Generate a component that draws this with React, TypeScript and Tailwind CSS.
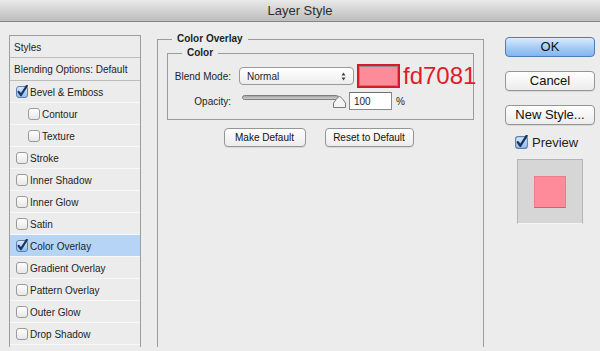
import React from 'react';

type Row = {
  label: string;
  header?: boolean;
  checked?: boolean;
  indent?: boolean;
  selected?: boolean;
  h?: string;
};

const ROWS: Row[] = [
  { label: 'Styles', header: true },
  { label: 'Blending Options: Default', header: true, h: 'h-[23px]' },
  { label: 'Bevel & Emboss', checked: true },
  { label: 'Contour', indent: true },
  { label: 'Texture', indent: true },
  { label: 'Stroke' },
  { label: 'Inner Shadow' },
  { label: 'Inner Glow' },
  { label: 'Satin' },
  { label: 'Color Overlay', checked: true, selected: true },
  { label: 'Gradient Overlay' },
  { label: 'Pattern Overlay' },
  { label: 'Outer Glow' },
  { label: 'Drop Shadow' },
];

const CheckBox: React.FC<{ checked?: boolean; size?: number }> = ({ checked, size = 12 }) => (
  <svg width={size + 1} height={size + 2} viewBox="0 0 13 14" className="shrink-0">
    <defs>
      <linearGradient id="cbOff" x1="0" y1="0" x2="0" y2="1">
        <stop offset="0" stopColor="#ffffff" />
        <stop offset="1" stopColor="#e6e6e6" />
      </linearGradient>
      <linearGradient id="cbOn" x1="0" y1="0" x2="0" y2="1">
        <stop offset="0" stopColor="#dcebfb" />
        <stop offset="1" stopColor="#8dbbee" />
      </linearGradient>
    </defs>
    <rect
      x="0.5"
      y="1.5"
      width="11"
      height="11"
      rx="2.5"
      fill={checked ? 'url(#cbOn)' : 'url(#cbOff)'}
      stroke={checked ? '#5f7fa8' : '#9a9a9a'}
    />
    {checked && (
      <path d="M2.6 6.8 L5 10 L10.8 0.8" fill="none" stroke="#1b3563" strokeWidth="2.2" strokeLinecap="round" strokeLinejoin="round" />
    )}
  </svg>
);

const btn =
  'flex items-center justify-center rounded-[4px] border border-[#959595] bg-gradient-to-b from-white to-[#ececec] text-[#111] shadow-[0_1px_0_rgba(0,0,0,0.08)]';

const App: React.FC = () => {
  return (
    <div className="flex h-[351px] w-[600px] flex-col overflow-hidden bg-[#ececec] font-['Liberation_Sans',Arial,sans-serif] text-[#1e1e1e]">
      {/* title bar */}
      <div className="flex h-[22px] shrink-0 items-center justify-center border-b border-[#848484] bg-gradient-to-b from-[#e9e9e9] to-[#bdbdbd] text-[13px] text-[#2e2e2e]">
        Layer Style
      </div>

      <div className="flex flex-1 pb-[4px]">
        {/* styles list */}
        <div className="ml-[9px] mt-[13px] w-[132px] shrink-0 border border-b-0 border-[#9d9d9d] text-[10px]">
          {ROWS.map((r, i) => (
            <div
              key={r.label}
              className={`flex items-center pt-[1px] ${r.h ?? 'h-[22px]'} border-b ${
                i < 2 ? 'border-[#bcbcbc]' : 'border-[#f8f8f8]'
              } ${r.selected ? 'bg-[#b5d4f6]' : ''} ${r.header ? 'pl-[4px]' : r.indent ? 'pl-[18px]' : 'pl-[6px]'}`}
            >
              {!r.header && <CheckBox checked={r.checked} />}
              <span className={r.header ? '' : 'ml-[1px]'}>{r.label}</span>
            </div>
          ))}
        </div>

        {/* color overlay */}
        <fieldset className="ml-[16px] mt-[11px] w-[327px] min-w-0 shrink-0 border border-b-0 border-[#9c9c9c] p-0">
          <legend className="ml-[14px] px-[5px] text-[10px] font-bold leading-[12px]">Color Overlay</legend>
          <div className="px-[9px]">
            <fieldset className="mt-[2px] w-[307px] min-w-0 border border-[#9c9c9c] p-0">
              <legend className="ml-[14px] px-[5px] text-[10px] font-bold leading-[12px]">Color</legend>
              <div className="pb-[9px] pt-[5px] text-[10px]">
                <div className="flex h-[24px] items-center">
                  <span className="w-[63px] shrink-0 text-right">Blend Mode:</span>
                  <div className="ml-[8px] flex h-[18px] w-[115px] shrink-0 items-center justify-between rounded-[4px] border border-[#9a9a9a] bg-gradient-to-b from-white to-[#ededed] pl-[7px] pr-[7px]">
                    <span>Normal</span>
                    <svg width="5" height="9" viewBox="0 0 5 9">
                      <path d="M2.5 0.5 L4.5 3.5 H0.5 Z M2.5 8.5 L4.5 5.5 H0.5 Z" fill="#444" />
                    </svg>
                  </div>
                  <div className="ml-[3px] flex h-[24px] w-[43px] shrink-0 border-2 border-[#d31b2b]">
                    <div className="flex-1 border border-[#8e8e8e] bg-[#fd8b9a]" />
                  </div>
                  <span className="ml-[3px] shrink-0 text-[24px] leading-none text-[#dc1e2c]">fd7081</span>
                </div>
                <div className="mt-[4px] flex h-[18px] items-center">
                  <span className="w-[63px] shrink-0 text-right">Opacity:</span>
                  <div className="relative ml-[11px] h-[18px] w-[104px] shrink-0">
                    <div className="absolute left-0 top-[3px] h-[5px] w-[97px] rounded-full border border-[#7d7d7d] bg-gradient-to-b from-[#a5a5a5] to-[#cfcfcf]" />
                    <svg className="absolute left-[91px] top-[3px]" width="13" height="13" viewBox="0 0 13 13">
                      <path d="M0.5 12.5 V8 Q3 4 6.5 1 Q10 4 12.5 8 V12.5 Z" fill="#f4f4f4" stroke="#7a7a7a" />
                    </svg>
                  </div>
                  <div className="ml-[3px] flex h-[18px] w-[43px] shrink-0 items-center border border-[#8a8a8a] border-t-[#6f6f6f] bg-white pl-[4px]">
                    100
                  </div>
                  <span className="ml-[4px]">%</span>
                </div>
              </div>
            </fieldset>
          </div>
          <div className="mt-[8px] flex justify-center gap-[19px] pr-[4px] text-[10px]">
            <div className={`${btn} h-[19px] w-[82px]`}>Make Default</div>
            <div className={`${btn} h-[19px] w-[89px]`}>Reset to Default</div>
          </div>
        </fieldset>

        {/* buttons */}
        <div className="ml-[21px] flex w-[90px] shrink-0 flex-col text-[13px]">
          <div className="mt-[15px] flex h-[20px] items-center justify-center rounded-[4px] border border-[#4e7db6] bg-gradient-to-b from-[#dcecfd] via-[#a9cdf5] to-[#82b6ef] text-[#111]">
            OK
          </div>
          <div className={`${btn} mt-[14px] h-[20px]`}>Cancel</div>
          <div className={`${btn} mt-[14px] h-[20px]`}>New Style...</div>
          <div className="ml-[10px] mt-[10px] flex h-[15px] items-center gap-[3px]">
            <CheckBox checked size={13} />
            <span>Preview</span>
          </div>
          <div className="ml-[12px] mt-[9px] flex h-[65px] w-[66px] items-center justify-center border border-[#b4b4b4] border-b-[#f4f4f4] bg-[#d6d6d6]">
            <div className="h-[32px] w-[32px] border border-[#f07b8c] border-b-[#d4606f] bg-[#fd8b9a]" />
          </div>
        </div>
      </div>
    </div>
  );
};

export default App;
